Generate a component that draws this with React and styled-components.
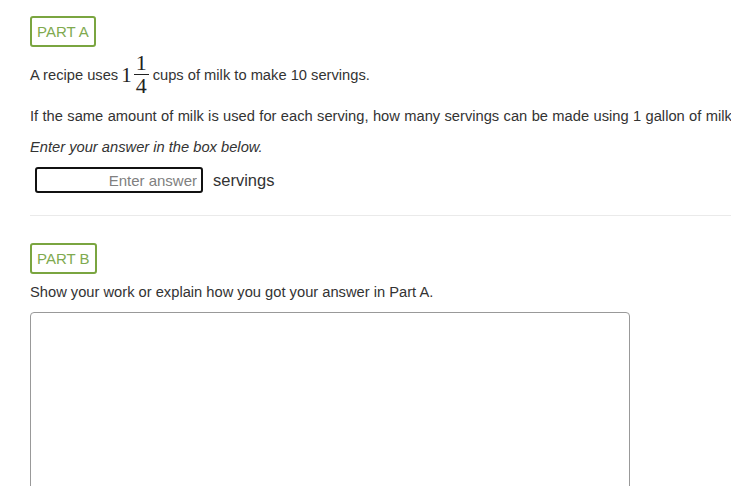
import React from 'react'
import styled, { createGlobalStyle } from 'styled-components'

const GlobalStyle = createGlobalStyle`
  html, body {
    margin: 0;
    padding: 0;
    background: #fff;
    overflow: hidden;
  }
  body {
    font-family: "Liberation Sans", Arial, sans-serif;
    color: #333;
  }
`

const Page = styled.div`
  padding: 16px 0 0 30px;
  width: 701px;
`

const Section = styled.section`
  display: flex;
  flex-direction: column;
  align-items: flex-start;
`

const PartBadge = styled.div`
  display: inline-block;
  padding: 5px 5px;
  border: 2px solid #7aa540;
  border-radius: 3px;
  color: #7faa4f;
  font-size: 15px;
  line-height: 17px;
`

const Text = styled.p`
  margin: ${(p) => p.$mt || 0}px 0 0;
  font-size: 14.7px;
  line-height: 18px;
  white-space: nowrap;
  word-spacing: ${(p) => (p.$wide ? '0.3px' : 'normal')};
  font-style: ${(p) => (p.$italic ? 'italic' : 'normal')};
`

const MathLine = styled.p`
  margin: 5px 0 0;
  display: flex;
  align-items: center;
  font-size: 14.7px;
  line-height: 18px;
  white-space: nowrap;
`

const Mixed = styled.span`
  display: inline-flex;
  align-items: center;
  margin: 0 4px 0 3px;
  font-family: "Liberation Serif", "Times New Roman", serif;
  color: #222;
`

const Whole = styled.span`
  font-size: 21px;
  line-height: 21px;
  padding-top: 2px;
`

const Fraction = styled.span`
  display: inline-flex;
  flex-direction: column;
  align-items: center;
  margin-left: 2px;
  font-size: 22px;
  line-height: 22px;
`

const Numerator = styled.span`
  padding: 0 2px;
  border-bottom: 1px solid #222;
`

const Denominator = styled.span`
  padding: 0 2px;
`

const AnswerRow = styled.div`
  display: flex;
  align-items: center;
  gap: 10px;
  margin: 11px 0 0 5px;
`

const AnswerInput = styled.input`
  box-sizing: border-box;
  width: 168px;
  height: 26px;
  padding: 0 4px;
  border: 2px solid #111;
  border-radius: 3px;
  font-family: "Liberation Sans", Arial, sans-serif;
  font-size: 15px;
  text-align: right;
  outline: none;
  &::placeholder {
    color: #808080;
  }
`

const Unit = styled.span`
  font-size: 16.5px;
  color: #333;
`

const Divider = styled.hr`
  align-self: stretch;
  margin: 22px 0 0;
  border: 0;
  border-top: 1px solid #eaeaea;
`

const Spacer = styled.div`
  height: 27px;
`

const WorkArea = styled.textarea`
  box-sizing: border-box;
  margin-top: 11px;
  width: 600px;
  height: 200px;
  border: 1px solid #999;
  border-radius: 4px;
  resize: none;
  outline: none;
`

export default function App() {
  return (
    <>
      <GlobalStyle />
      <Page>
        <Section>
          <PartBadge>PART A</PartBadge>
          <MathLine>
            A recipe uses
            <Mixed>
              <Whole>1</Whole>
              <Fraction>
                <Numerator>1</Numerator>
                <Denominator>4</Denominator>
              </Fraction>
            </Mixed>
            cups of milk to make 10 servings.
          </MathLine>
          <Text $mt={10} $wide>
            If the same amount of milk is used for each serving, how many servings can be made using 1 gallon of milk?
          </Text>
          <Text $mt={13} $italic>Enter your answer in the box below.</Text>
          <AnswerRow>
            <AnswerInput placeholder="Enter answer" />
            <Unit>servings</Unit>
          </AnswerRow>
          <Divider />
        </Section>
        <Spacer />
        <Section>
          <PartBadge>PART B</PartBadge>
          <Text $mt={9}>Show your work or explain how you got your answer in Part A.</Text>
          <WorkArea />
        </Section>
      </Page>
    </>
  )
}
